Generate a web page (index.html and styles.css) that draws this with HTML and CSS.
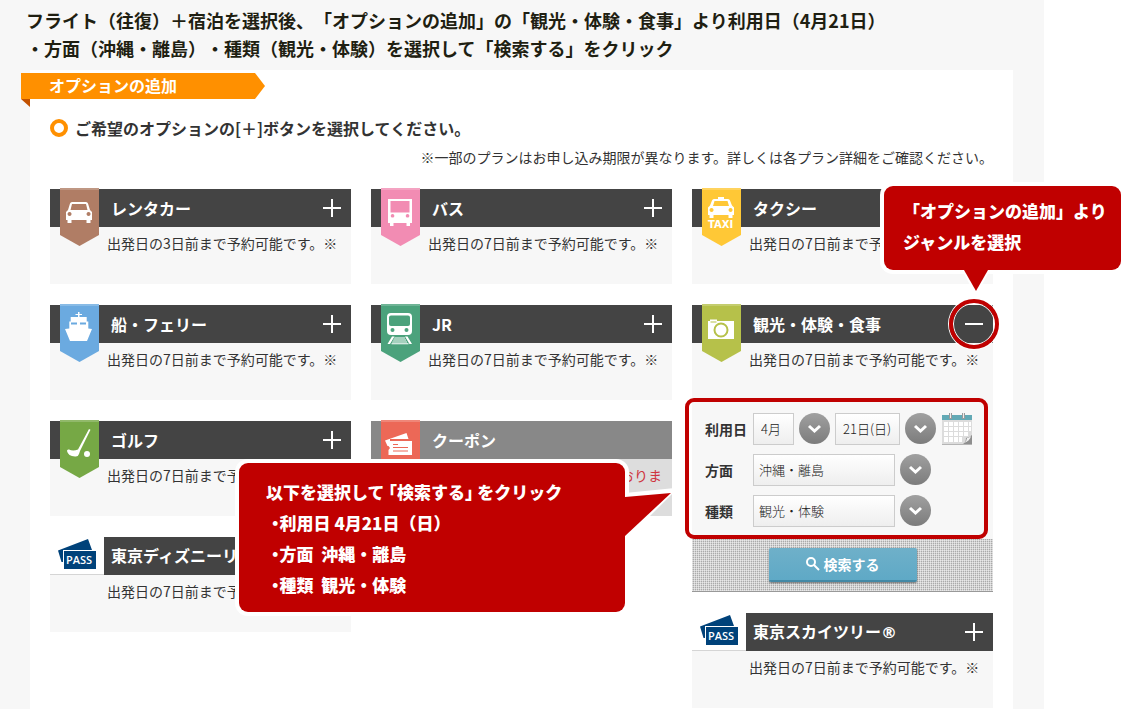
FILE: index.html
```html
<!DOCTYPE html>
<html lang="ja">
<head>
<meta charset="UTF-8">
<meta name="viewport" content="width=device-width, initial-scale=1.0">
<title>オプションの追加</title>
<link rel="stylesheet" href="styles.css">
</head>
<body>

<div class="page">
    <p class="lead">フライト（往復）＋宿泊を選択後、「オプションの追加」の「観光・体験・食事」より利用日（4月21日）<br>・方面（沖縄・離島）・種類（観光・体験）を選択して「検索する」をクリック</p>

    <main class="panel">
        <h1 class="ribbon">オプションの追加</h1>
        <h2 class="guide">ご希望のオプションの[＋]ボタンを選択してください。</h2>
        <p class="note">※一部のプランはお申し込み期限が異なります。詳しくは各プラン詳細をご確認ください。</p>

        <div class="columns">
            <div class="column">
                <section class="card">
                    <div class="card-head">
                        <span class="flag rentacar">
                            <svg viewBox="0 0 39 58"><path fill-rule="evenodd" d="M12 14h14q1.500 0 2 1.500l2 6.500 2 2v8h-1.500v3h-4v-3h-15v3h-4v-3H6v-8l2-2 2-6.500Q10.500 14 12 14zM12 16l-1.500 6h17L26 16zM9.500 24a2 2 0 1 0 .1 0zM28.500 24a2 2 0 1 0 .1 0z"/></svg>
                        </span>
                        <h3>レンタカー</h3>
                        <button class="toggle" type="button" aria-label="開く"></button>
                    </div>
                    <p class="desc">出発日の3日前まで予約可能です。※</p>
                </section>

                <section class="card">
                    <div class="card-head">
                        <span class="flag ferry">
                            <svg viewBox="0 0 39 58"><path d="M18 8h1.500v2H22v1h-2.500v2h7.200v4.500h1.600v7L32 25l-5 12H10L5 25l4.300-.5v-7h1.400V13H18v-2h-2.500v-1H18z"/><path class="cut" d="M11 18.500h6v2h-6zM20 18.500h6v2h-6z"/></svg>
                        </span>
                        <h3>船・フェリー</h3>
                        <button class="toggle" type="button" aria-label="開く"></button>
                    </div>
                    <p class="desc">出発日の7日前まで予約可能です。※</p>
                </section>

                <section class="card">
                    <div class="card-head">
                        <span class="flag golf">
                            <svg viewBox="0 0 39 58"><path d="M29 9l1.500.8L20 31l-1 3q-1 3-4 2.500Q8 36 7 31q0-2 2-1.500 4 2 9 0z"/><circle cx="27" cy="34" r="3"/></svg>
                        </span>
                        <h3>ゴルフ</h3>
                        <button class="toggle" type="button" aria-label="開く"></button>
                    </div>
                    <p class="desc">出発日の7日前まで予約可能です。※</p>
                </section>

                <section class="card">
                    <div class="card-head ticket">
                        <svg class="pass" viewBox="0 0 54 38"><path d="M8 13.500L38 2l4 11H13v12h-1.500z"/><path d="M14 14h32v18H14z"/><text x="16" y="27">PASS</text></svg>
                        <h3>東京ディズニーリゾート<span class="reg">®</span></h3>
                        <button class="toggle" type="button" aria-label="開く"></button>
                    </div>
                    <p class="desc">出発日の7日前まで予約可能です。※</p>
                </section>
            </div>

            <div class="column">
                <section class="card">
                    <div class="card-head">
                        <span class="flag bus">
                            <svg viewBox="0 0 39 58"><path fill-rule="evenodd" d="M7 11h24v24h-2v3h-3.500v-3h-13v3H9v-3H7zM9.500 13v11.500h19V13zM11.500 26a1.800 1.800 0 1 0 .1 0zM26.500 26a1.800 1.800 0 1 0 .1 0z"/></svg>
                        </span>
                        <h3>バス</h3>
                        <button class="toggle" type="button" aria-label="開く"></button>
                    </div>
                    <p class="desc">出発日の7日前まで予約可能です。※</p>
                </section>

                <section class="card">
                    <div class="card-head">
                        <span class="flag train">
                            <svg viewBox="0 0 39 58"><rect x="6" y="9" width="25" height="22" rx="4"/><rect class="cut" x="8" y="11.500" width="21" height="10.500" rx="2"/><circle class="cut" cx="11.500" cy="26" r="2"/><circle class="cut" cx="25.500" cy="26" r="2"/><path d="M11 32.500h2.500L9 40H6.500zM24 32.500h2.500L31 40h-2.500zM13.500 33.500h10.500v1H13zM12.500 35.500h12.500v1H12zM11.500 37.500h14.500v1H11zM10.500 39.200h17v1h-17z"/></svg>
                        </span>
                        <h3>JR</h3>
                        <button class="toggle" type="button" aria-label="開く"></button>
                    </div>
                    <p class="desc">出発日の7日前まで予約可能です。※</p>
                </section>

                <section class="card closed">
                    <div class="card-head">
                        <span class="flag coupon">
                            <svg viewBox="0 0 39 58"><path d="M4 20.500L25.500 13l2 6H9v7H6.500z"/><path d="M7.500 21H31v14H7.500v-5l1.500-2-1.500-2z"/><path class="cut" d="M12 24h5v1h-5zM12 27h15v1H12zM12 30.500h15v1H12z"/></svg>
                        </span>
                        <h3>クーポン</h3>
                    </div>
                    <p class="desc">現在お取扱いを停止しておりま</p>
                </section>
            </div>

            <div class="column">
                <section class="card">
                    <div class="card-head">
                        <span class="flag taxi">
                            <svg viewBox="0 0 39 58"><path fill-rule="evenodd" d="M16 9h6v2h4q1.500 0 2 1.500l2 5 2 2V27h-1.500v3h-4v-3h-15v3h-4v-3H6v-7.500l2-2 2-5q.5-1.500 2-1.500h4zM12.500 13l-1.500 5h16l-1.500-5zM9.500 20a2 2 0 1 0 .1 0zM28.500 20a2 2 0 1 0 .1 0z"/><text x="6" y="40">TAXI</text></svg>
                        </span>
                        <h3>タクシー</h3>
                        <button class="toggle" type="button" aria-label="開く"></button>
                    </div>
                    <p class="desc">出発日の7日前まで予約可能です。※</p>
                </section>

                <section class="card">
                    <div class="card-head">
                        <span class="flag sightseeing">
                            <svg viewBox="0 0 39 58"><path d="M6 17h2v-1.500h7V17h17v18H6z"/><circle class="lens" cx="19" cy="26" r="6.500"/><path class="cut" d="M8.500 17.500h6v1h-6z"/></svg>
                        </span>
                        <h3>観光・体験・食事</h3>
                        <button class="toggle open" type="button" aria-label="閉じる"></button>
                    </div>
                    <p class="desc">出発日の7日前まで予約可能です。※</p>
                    <form>
                        <div class="fields">
                            <div class="field">
                                <label for="month">利用日</label>
                                <select id="month" class="month"><option>4月</option></select>
                                <span class="arrow"><svg viewBox="0 0 31 31"><path d="M10 13l5.500 5 5.500-5"/></svg></span>
                                <select id="day" class="day" aria-label="日"><option>21日(日)</option></select>
                                <span class="arrow"><svg viewBox="0 0 31 31"><path d="M10 13l5.500 5 5.500-5"/></svg></span>
                                <button class="calendar" type="button" aria-label="カレンダー">
                                    <svg viewBox="0 0 32 34">
                                        <path d="M1 4h30v29H1z" fill="#b5b5b5"/>
                                        <path d="M1 4h30v28H1z" fill="#dcdcdc"/>
                                        <path d="M1 3h30v5H1z" fill="#62a9b5"/>
                                        <path d="M3 10h4v4H3zM8 10h4v4H8zM13 10h4v4h-4zM18 10h4v4h-4zM23 10h4v4h-4zM28 10h2v4h-2zM3 15h4v4H3zM8 15h4v4H8zM13 15h4v4h-4zM18 15h4v4h-4zM23 15h4v4h-4zM28 15h2v4h-2zM3 20h4v4H3zM8 20h4v4H8zM13 20h4v4h-4zM18 20h4v4h-4zM23 20h4v4h-4zM3 25h4v5H3zM8 25h4v5H8zM13 25h4v5h-4zM18 25h3v5h-3z" fill="#fff"/>
                                        <path d="M31 23v9h-9q3-2 3-6 3 0 6-3z" fill="#8f8f8f"/>
                                        <path d="M30 24q-1 5-7 7 3-2 3-5 2 0 4-2z" fill="#f2f2f2"/>
                                        <path d="M8 1h3v6H8zM21 1h3v6h-3z" fill="#9a9a9a"/>
                                        <path d="M9 1h1v5H9zM22 1h1v5h-1z" fill="#eee"/>
                                    </svg>
                                </button>
                            </div>
                            <div class="field">
                                <label for="area">方面</label>
                                <select id="area" class="wide"><option>沖縄・離島</option></select>
                                <span class="arrow"><svg viewBox="0 0 31 31"><path d="M10 13l5.500 5 5.500-5"/></svg></span>
                            </div>
                            <div class="field">
                                <label for="kind">種類</label>
                                <select id="kind" class="wide"><option>観光・体験</option></select>
                                <span class="arrow"><svg viewBox="0 0 31 31"><path d="M10 13l5.500 5 5.500-5"/></svg></span>
                            </div>
                        </div>
                        <div class="search">
                            <button type="submit"><svg viewBox="0 0 14 14"><circle cx="5" cy="5" r="4"/><path d="M8 8l5 5"/></svg>検索する</button>
                        </div>
                    </form>
                </section>

                <section class="card">
                    <div class="card-head ticket">
                        <svg class="pass" viewBox="0 0 54 38"><path d="M8 13.500L38 2l4 11H13v12h-1.500z"/><path d="M14 14h32v18H14z"/><text x="16" y="27">PASS</text></svg>
                        <h3>東京スカイツリー<span class="reg">®</span></h3>
                        <button class="toggle" type="button" aria-label="開く"></button>
                    </div>
                    <p class="desc">出発日の7日前まで予約可能です。※</p>
                </section>
            </div>
        </div>
    </main>

    <div class="callout callout-genre">
        <svg class="tail" viewBox="0 0 32 26"><path class="edge" d="M2 0h28L16 26z"/><path d="M4 0h24L16 21z"/></svg>
        <p>「オプションの追加」より<br>ジャンルを選択</p>
    </div>

    <div class="callout callout-search">
        <svg class="tail" viewBox="0 0 50 56"><path class="edge" d="M0 6l50-5v3L0 54z"/><path d="M0 10l46-4L0 49z"/></svg>
        <p class="tight">以下を選択して 「検索する」 をクリック</p>
        <ul>
            <li>利用日 4月21日（日）</li>
            <li>方面&nbsp;&nbsp;沖縄・離島</li>
            <li>種類&nbsp;&nbsp;観光・体験</li>
        </ul>
    </div>
</div>

</body>
</html>
```
FILE: styles.css
```css
*, *::before, *::after {
    box-sizing: border-box;
}
body {
    margin: 0;
    background: #fff;
    color: #333;
    font-family: "Noto Sans CJK JP", "Liberation Sans", sans-serif;
    text-spacing-trim: space-all;
}
h1, h2, h3, p, ul {
    margin: 0;
    padding: 0;
}
ul {
    list-style: none;
}
button, select {
    font-family: inherit;
    border: 0;
    padding: 0;
    margin: 0;
}
.page {
    position: relative;
    display: flex;
    flex-direction: column;
    min-height: 100vh;
    margin-right: 81px;
    padding: 0 31px 0 30px;
    background: #f7f7f7;
}
.lead {
    margin: 0 -20px 0 -4px;
    padding: 6px 0 8px;
    color: #1f1f12;
    font-size: 18px;
    font-weight: bold;
    line-height: 28px;
    white-space: nowrap;
}
.panel {
    flex: 1;
    padding: 3px 20px 0;
    background: #fff;
}

/* orange ribbon */
.ribbon {
    position: relative;
    width: 244px;
    height: 26px;
    margin-left: -29px;
    padding-left: 28px;
    color: #fff;
    font-size: 16px;
    line-height: 24px;
}
.ribbon::before {
    content: "";
    position: absolute;
    z-index: -1;
    inset: 0;
    background: #ff9000;
    clip-path: polygon(0 0, 234px 0, 100% 50%, 234px 100%, 0 100%);
}
.ribbon::after {
    content: "";
    position: absolute;
    left: 0;
    top: 100%;
    border-top: 8px solid #c25100;
    border-left: 9px solid transparent;
}
.panel, .ribbon {
    z-index: 0;
}
.guide {
    display: flex;
    align-items: center;
    gap: 7px;
    margin-top: 17px;
    font-size: 16px;
    line-height: 24px;
}
.guide::before {
    content: "";
    width: 18px;
    height: 18px;
    border: 4px solid #ff9000;
    border-radius: 50%;
}
.note {
    margin-top: 7px;
    font-size: 14px;
    line-height: 20px;
    text-align: right;
}

/* option cards */
.columns {
    display: flex;
    gap: 20px;
    margin-top: 22px;
}
.column {
    display: flex;
    flex: 1;
    flex-direction: column;
    gap: 21px;
    min-width: 0;
}
.card {
    background: #f7f7f7;
}
.card-head {
    position: relative;
    display: flex;
    align-items: center;
    justify-content: space-between;
    height: 38px;
    padding: 0 9px 0 61px;
    background: #444;
    color: #fff;
}
.card-head h3 {
    font-size: 16px;
    line-height: 24px;
}
.reg {
    font-family: "DejaVu Sans", sans-serif;
}
.desc {
    height: 57px;
    padding: 5px 0 0 57px;
    font-size: 14px;
    line-height: 22px;
    white-space: nowrap;
}
.closed {
    background: #ddd;
}
.closed .card-head {
    background: #888;
}
.closed .desc {
    padding-right: 10px;
    color: #cf3540;
    text-align: right;
}
.toggle {
    width: 20px;
    height: 20px;
    background:
        linear-gradient(#fff, #fff) center / 18px 2px no-repeat,
        linear-gradient(#fff, #fff) center / 2px 18px no-repeat;
}
.toggle.open {
    position: relative;
    background: linear-gradient(#fff, #fff) center / 18px 2px no-repeat;
}
.toggle.open::after {
    content: "";
    position: absolute;
    inset: -15px;
    border: 4px solid #c00000;
    border-radius: 50%;
    box-shadow: 0 0 0 1px #fff, inset 0 0 0 1px #fff;
}

/* flags */
.flag {
    position: absolute;
    left: 10px;
    top: -1px;
    width: 39px;
    height: 58px;
    background: var(--flag);
    clip-path: polygon(0 0, 100% 0, 100% 47px, 50% 100%, 0 47px);
    box-shadow: inset 0 2px 0 rgba(255, 255, 255, .2);
}
.flag svg {
    display: block;
    fill: #fff;
}
.flag .cut {
    fill: var(--flag);
}
.flag .lens {
    fill: none;
    stroke: var(--flag);
    stroke-width: 2;
}
.flag text {
    font: bold 10px "DejaVu Sans", sans-serif;
}
.rentacar { --flag: #b07d65; }
.ferry { --flag: #6baae0; }
.golf { --flag: #76a845; }
.bus { --flag: #f28cb3; }
.train { --flag: #4ba27c; }
.taxi { --flag: #ffc836; }
.sightseeing { --flag: #b6c14a; }
.coupon {
    --flag: #ec6857;
    clip-path: inset(0 0 18px 0);
}
.ticket {
    padding-left: 0;
    background: linear-gradient(to right, #fff 54px, #444 54px);
}
.ticket::before {
    content: "";
    position: absolute;
    left: 0;
    bottom: 0;
    width: 54px;
    border-bottom: 1px solid #d5d5d5;
}
.ticket h3 {
    flex: 1;
    padding-left: 7px;
}
.pass {
    width: 54px;
    height: 38px;
    fill: #00427a;
}
.pass text {
    fill: #fff;
    font: 600 11px "Open Sans", sans-serif;
}

/* search form */
.fields {
    position: relative;
    display: flex;
    flex-direction: column;
    gap: 10px;
    padding: 13px;
}
.fields::after {
    content: "";
    position: absolute;
    inset: -2px 5px 0 -7px;
    border: 4px solid #c00000;
    border-radius: 9px;
    pointer-events: none;
}
.field {
    display: flex;
    align-items: center;
    gap: 5px;
    height: 31px;
}
.field label {
    width: 43px;
    font-size: 14px;
    font-weight: bold;
    line-height: 20px;
    white-space: nowrap;
}
.field select {
    height: 32px;
    padding-left: 5px;
    appearance: none;
    border: 1px solid #ccc;
    border-radius: 0;
    background: linear-gradient(#fff, #eee);
    color: #222;
    font-size: 13px;
    font-weight: 300;
}
.field .month {
    width: 41px;
    padding-left: 7px;
}
.field .day {
    width: 65px;
    padding-left: 7px;
}
.field .wide {
    width: 142px;
}
.arrow {
    width: 31px;
    height: 31px;
    border-radius: 50%;
    background: linear-gradient(#a0a0a0, #7c7c7c);
}
.arrow svg {
    display: block;
    fill: none;
    stroke: #fff;
    stroke-width: 3;
}
.calendar {
    width: 32px;
    height: 34px;
    background: none;
}
.calendar svg {
    display: block;
}
.search {
    display: flex;
    justify-content: center;
    height: 53px;
    padding-top: 9px;
    border-bottom: 1px solid #999;
    background:
        repeating-linear-gradient(to right, rgba(255, 255, 255, .5) 0 1px, transparent 1px 2px),
        repeating-linear-gradient(#aaa 0 1px, #d2d2d2 1px 2px);
}
.search button {
    display: flex;
    align-items: center;
    justify-content: center;
    gap: 4px;
    width: 148px;
    height: 34px;
    border-bottom: 2px solid #4389a6;
    border-radius: 2px;
    background: linear-gradient(#6fb0c9, #5fa9c6);
    box-shadow: 0 1px 2px rgba(0, 0, 0, .5);
    color: #fff;
    font-size: 14px;
    font-weight: bold;
}
.search svg {
    width: 14px;
    height: 14px;
    fill: none;
    stroke: #fff;
    stroke-width: 2;
}

/* red callouts */
.callout {
    position: absolute;
    border-radius: 9px;
    background: #c00000;
    box-shadow: 0 0 0 4px #fff;
    color: #fff;
    font-size: 17px;
    font-weight: 900;
    line-height: 31px;
    white-space: nowrap;
}
.callout-genre {
    left: 884px;
    top: 186px;
    width: 237px;
    padding: 9px 0 13px 19px;
}
.callout-search {
    left: 239px;
    top: 463px;
    width: 386px;
    padding: 13px 0 12px 27px;
}
.callout .tail {
    position: absolute;
    fill: #c00000;
}
.callout .edge {
    fill: #fff;
}
.callout-genre .tail {
    left: 76px;
    top: 100%;
    width: 32px;
    height: 26px;
}
.callout-search .tail {
    left: 100%;
    top: 24px;
    width: 50px;
    height: 56px;
}
.callout .tight {
    font-feature-settings: "halt";
}
.callout ul {
    padding-left: 5px;
}
.callout li::before {
    content: "・";
    font-feature-settings: "halt";
}
```
